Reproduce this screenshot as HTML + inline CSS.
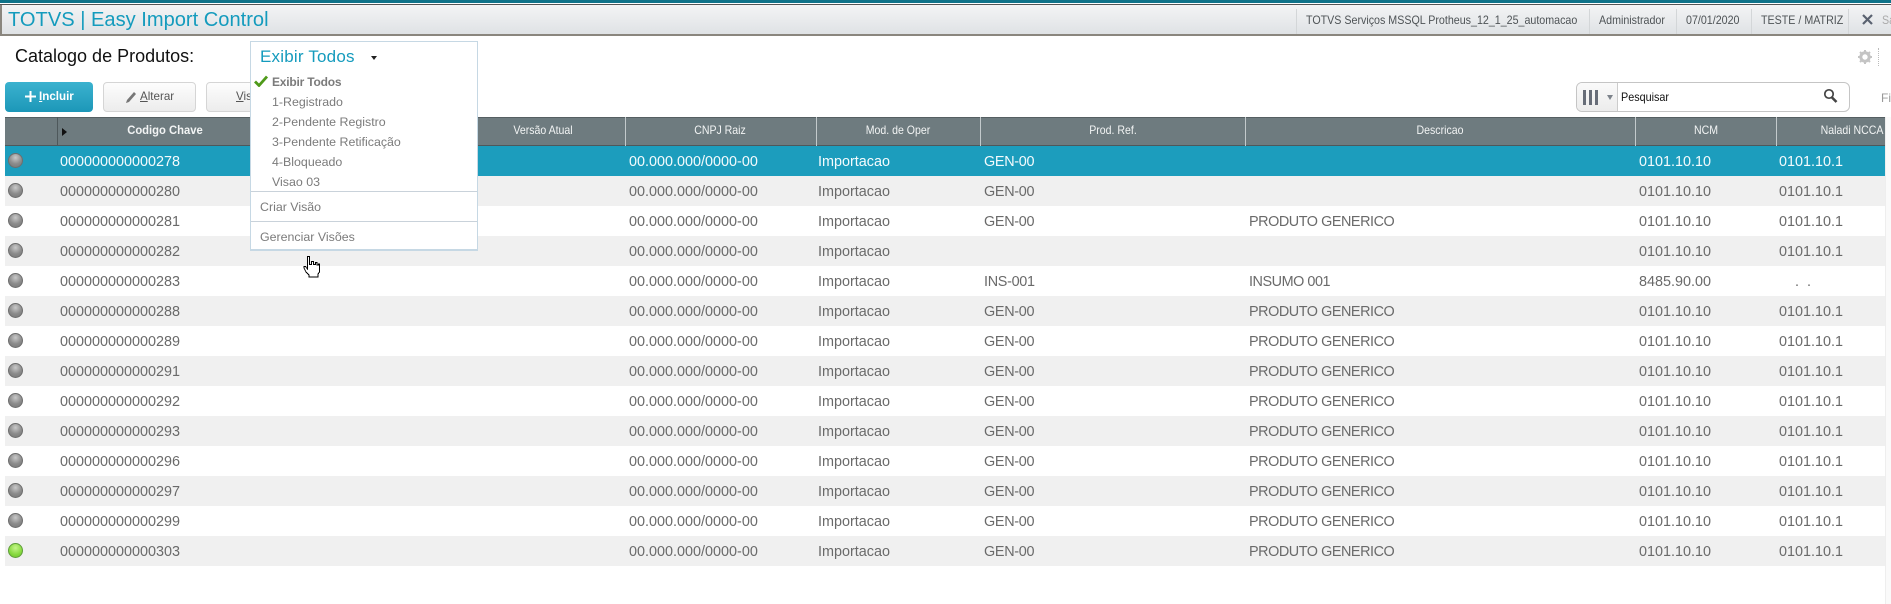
<!DOCTYPE html>
<html lang="pt"><head><meta charset="utf-8"><title>TOTVS | Easy Import Control</title>
<style>
html,body{margin:0;padding:0;background:#fff}
body{width:1891px;height:604px;overflow:hidden;position:relative;font-family:"Liberation Sans",Arial,sans-serif}
.a{position:absolute;white-space:nowrap}
#bar{position:absolute;left:0;top:4px;width:1891px;height:32px;box-sizing:border-box;border-top:1px solid #555;border-bottom:2px solid #8a867e;background:linear-gradient(#f3f4f5,#dfe2e5)}
.s{position:absolute;top:10px;height:25px;width:1px;background:#d3d6d8}
.i{position:absolute;top:12px;font-size:12px;line-height:14px;color:#4e5356;white-space:nowrap;transform:scaleX(.89);transform-origin:0 0}
.btn{position:absolute;top:82px;height:30px;box-sizing:border-box;border:1px solid #d5d5d5;border-radius:4px;background:linear-gradient(#fdfdfd,#ececec);font-size:11.6px;line-height:28px;color:#555;white-space:nowrap}
#head{position:absolute;left:5px;top:117px;width:1880px;height:29px;box-sizing:border-box;background:#6e7b7f;border-top:1px solid #555f62;border-bottom:1px solid #4e585b}
.hs{position:absolute;top:117px;height:29px;width:1px;background:#c3cacc}
.h{position:absolute;top:124px;font-size:11.6px;line-height:14px;color:#f2f4f4;transform:translateX(-50%) scaleX(.91);white-space:nowrap}
.r{position:absolute;left:5px;width:1880px;height:30px}
.g{background:#f0f0f0}
.sel{background:#1c9dbd}
.c{position:absolute;font-size:14.4px;line-height:16px;color:#6a6a6a;white-space:nowrap;margin-top:1px}
.c[style*="left:1244px"]{letter-spacing:-.45px}
.c[style*="left:979px"]{letter-spacing:-.3px}
.w{color:#f4fbfd}
.b{position:absolute;left:3px;width:15px;height:15px;border-radius:50%;box-sizing:border-box;border:1px solid #6e6e6e;background:radial-gradient(circle at 50% 28%,#c9c9c9,#8b8b8b 55%,#777)}
.gr{border-color:#5f9d3b;background:radial-gradient(circle at 50% 30%,#c5f58a,#86d93e 60%,#6fbf2e)}
#menu{position:absolute;left:250px;top:41px;width:228px;height:210px;box-sizing:border-box;background:#fff;border:1px solid #c6d8e4;border-bottom-width:2px}
.m{position:absolute;left:21px;font-size:12.4px;letter-spacing:0;line-height:14px;color:#7b7b7b;white-space:nowrap}
.l{position:absolute;left:0;width:226px;height:1px;background:#c9d2da}
</style></head><body>
<div class="a" style="left:0;top:0;width:1891px;height:3px;background:#0f7389"></div>
<div id="bar">
<div class="a" style="left:0;top:0;width:2px;height:29px;background:#8a867e"></div>
<div class="a" style="left:8px;top:3px;font-size:20.1px;line-height:24px;color:#149bbd">TOTVS | Easy Import Control</div>
<div class="s" style="left:1296px;top:4px"></div><div class="s" style="left:1589px;top:4px"></div><div class="s" style="left:1676px;top:4px"></div><div class="s" style="left:1751px;top:4px"></div><div class="s" style="left:1848px;top:4px"></div>
<div class="i" style="left:1306px;top:8px">TOTVS Serviços MSSQL Protheus_12_1_25_automacao</div>
<div class="i" style="left:1599px;top:8px">Administrador</div>
<div class="i" style="left:1686px;top:8px">07/01/2020</div>
<div class="i" style="left:1761px;top:8px">TESTE / MATRIZ</div>
<svg class="a" style="left:1862px;top:9px" width="11" height="11" viewBox="0 0 11 11"><path d="M1 1L10 10M10 1L1 10" stroke="#5a6270" stroke-width="2.2"/></svg>
<div class="i" style="left:1882px;top:8px;color:#aaa">Sa</div>
</div>

<div class="a" style="left:15px;top:46px;font-size:18px;line-height:20px;color:#111">Catalogo de Produtos:</div>
<svg class="a" style="left:1858px;top:50px" width="14" height="14" viewBox="0 0 14 14"><circle cx="7" cy="7" r="4.2" fill="none" stroke="#c4c4c4" stroke-width="3"/><path d="M7 0V3M7 11V14M0 7H3M11 7H14M2 2L4 4M10 10L12 12M12 2L10 4M4 10L2 12" stroke="#c4c4c4" stroke-width="2"/></svg>
<div class="a" style="left:1878px;top:48px;height:18px;border-left:1px dotted #bbb"></div>

<div class="btn" style="left:5px;width:88px;border:0;background:linear-gradient(#3bb2cf,#1c97b8);color:#fff;line-height:30px;font-weight:bold">
<svg class="a" style="left:20px;top:9px" width="11" height="11" viewBox="0 0 11 11"><path d="M5.5 0V11M0 5.5H11" stroke="#fff" stroke-width="2"/></svg>
<span class="a" style="left:34px"><u>I</u>ncluir</span></div>
<div class="btn" style="left:103px;width:93px">
<svg class="a" style="left:21px;top:8px" width="12" height="13" viewBox="0 0 12 13"><path d="M1 12L2 9L9 1L11 3L4 11Z" fill="#777"/></svg>
<span class="a" style="left:36px"><u>A</u>lterar</span></div>
<div class="btn" style="left:206px;width:100px"><span class="a" style="left:29px"><u>V</u>isualizar</span></div>

<div class="a" style="left:1576px;top:82px;width:274px;height:30px;box-sizing:border-box;border:1px solid #c5c5c5;border-radius:6px;background:#fff;overflow:hidden">
<div class="a" style="left:0;top:0;width:40px;height:28px;border-right:1px solid #ccc;background:linear-gradient(#fafafa,#ececec)">
<div class="a" style="left:6px;top:7px;width:3px;height:15px;background:#676d78"></div>
<div class="a" style="left:12px;top:7px;width:3px;height:15px;background:#676d78"></div>
<div class="a" style="left:18px;top:7px;width:3px;height:15px;background:#676d78"></div>
<div class="a" style="left:30px;top:12px;width:0;height:0;border-left:3.5px solid transparent;border-right:3.5px solid transparent;border-top:5px solid #7d838b"></div>
</div>
<div class="a" style="left:44px;top:7px;font-size:12px;line-height:14px;color:#111;transform:scaleX(.9);transform-origin:0 0">Pesquisar</div>
<svg class="a" style="left:246px;top:5px" width="15" height="16" viewBox="0 0 15 16"><circle cx="6" cy="6" r="4.2" fill="none" stroke="#444" stroke-width="1.7"/><path d="M9 9.5L13.5 14" stroke="#444" stroke-width="2.6"/></svg>
</div>
<div class="a" style="left:1881px;top:91px;font-size:12px;line-height:14px;color:#999">Filtrar</div>

<div id="head"></div>
<div class="hs" style="left:57px;background:#4e585b"></div>
<div class="hs" style="left:625px"></div><div class="hs" style="left:816px"></div><div class="hs" style="left:980px"></div><div class="hs" style="left:1245px"></div><div class="hs" style="left:1635px"></div><div class="hs" style="left:1776px"></div>
<div class="a" style="left:62px;top:128px;width:0;height:0;border-top:4px solid transparent;border-bottom:4px solid transparent;border-left:5px solid #111"></div>
<div class="h" style="left:165px;font-weight:bold;transform:translateX(-50%) scaleX(.97)">Codigo Chave</div>
<div class="h" style="left:543px">Versão Atual</div>
<div class="h" style="left:720px">CNPJ Raiz</div>
<div class="h" style="left:898px">Mod. de Oper</div>
<div class="h" style="left:1113px">Prod. Ref.</div>
<div class="h" style="left:1440px">Descricao</div>
<div class="h" style="left:1706px">NCM</div>
<div class="h" style="left:1852px">Naladi NCCA</div>
<div class="a" style="left:1885px;top:117px;width:6px;height:487px;background:#fafafa;border-left:1px solid #eee;box-sizing:border-box"></div>

<div class="r sel" style="top:146px"><i class="b" style="top:7px"></i><span class="c w" style="left:55px;top:7px">000000000000278</span><span class="c w" style="left:624px;top:7px">00.000.000/0000-00</span><span class="c w" style="left:813px;top:7px">Importacao</span><span class="c w" style="left:979px;top:7px">GEN-00</span><span class="c w" style="left:1634px;top:7px">0101.10.10</span><span class="c w" style="left:1774px;top:7px">0101.10.1</span></div>
<div class="r g" style="top:176px"><i class="b" style="top:7px"></i><span class="c" style="left:55px;top:7px">000000000000280</span><span class="c" style="left:624px;top:7px">00.000.000/0000-00</span><span class="c" style="left:813px;top:7px">Importacao</span><span class="c" style="left:979px;top:7px">GEN-00</span><span class="c" style="left:1634px;top:7px">0101.10.10</span><span class="c" style="left:1774px;top:7px">0101.10.1</span></div>
<div class="r" style="top:206px"><i class="b" style="top:7px"></i><span class="c" style="left:55px;top:7px">000000000000281</span><span class="c" style="left:624px;top:7px">00.000.000/0000-00</span><span class="c" style="left:813px;top:7px">Importacao</span><span class="c" style="left:979px;top:7px">GEN-00</span><span class="c" style="left:1244px;top:7px">PRODUTO GENERICO</span><span class="c" style="left:1634px;top:7px">0101.10.10</span><span class="c" style="left:1774px;top:7px">0101.10.1</span></div>
<div class="r g" style="top:236px"><i class="b" style="top:7px"></i><span class="c" style="left:55px;top:7px">000000000000282</span><span class="c" style="left:624px;top:7px">00.000.000/0000-00</span><span class="c" style="left:813px;top:7px">Importacao</span><span class="c" style="left:1634px;top:7px">0101.10.10</span><span class="c" style="left:1774px;top:7px">0101.10.1</span></div>
<div class="r" style="top:266px"><i class="b" style="top:7px"></i><span class="c" style="left:55px;top:7px">000000000000283</span><span class="c" style="left:624px;top:7px">00.000.000/0000-00</span><span class="c" style="left:813px;top:7px">Importacao</span><span class="c" style="left:979px;top:7px">INS-001</span><span class="c" style="left:1244px;top:7px">INSUMO 001</span><span class="c" style="left:1634px;top:7px">8485.90.00</span><span class="c" style="left:1790px;top:7px">.&nbsp;&nbsp;.</span></div>
<div class="r g" style="top:296px"><i class="b" style="top:7px"></i><span class="c" style="left:55px;top:7px">000000000000288</span><span class="c" style="left:624px;top:7px">00.000.000/0000-00</span><span class="c" style="left:813px;top:7px">Importacao</span><span class="c" style="left:979px;top:7px">GEN-00</span><span class="c" style="left:1244px;top:7px">PRODUTO GENERICO</span><span class="c" style="left:1634px;top:7px">0101.10.10</span><span class="c" style="left:1774px;top:7px">0101.10.1</span></div>
<div class="r" style="top:326px"><i class="b" style="top:7px"></i><span class="c" style="left:55px;top:7px">000000000000289</span><span class="c" style="left:624px;top:7px">00.000.000/0000-00</span><span class="c" style="left:813px;top:7px">Importacao</span><span class="c" style="left:979px;top:7px">GEN-00</span><span class="c" style="left:1244px;top:7px">PRODUTO GENERICO</span><span class="c" style="left:1634px;top:7px">0101.10.10</span><span class="c" style="left:1774px;top:7px">0101.10.1</span></div>
<div class="r g" style="top:356px"><i class="b" style="top:7px"></i><span class="c" style="left:55px;top:7px">000000000000291</span><span class="c" style="left:624px;top:7px">00.000.000/0000-00</span><span class="c" style="left:813px;top:7px">Importacao</span><span class="c" style="left:979px;top:7px">GEN-00</span><span class="c" style="left:1244px;top:7px">PRODUTO GENERICO</span><span class="c" style="left:1634px;top:7px">0101.10.10</span><span class="c" style="left:1774px;top:7px">0101.10.1</span></div>
<div class="r" style="top:386px"><i class="b" style="top:7px"></i><span class="c" style="left:55px;top:7px">000000000000292</span><span class="c" style="left:624px;top:7px">00.000.000/0000-00</span><span class="c" style="left:813px;top:7px">Importacao</span><span class="c" style="left:979px;top:7px">GEN-00</span><span class="c" style="left:1244px;top:7px">PRODUTO GENERICO</span><span class="c" style="left:1634px;top:7px">0101.10.10</span><span class="c" style="left:1774px;top:7px">0101.10.1</span></div>
<div class="r g" style="top:416px"><i class="b" style="top:7px"></i><span class="c" style="left:55px;top:7px">000000000000293</span><span class="c" style="left:624px;top:7px">00.000.000/0000-00</span><span class="c" style="left:813px;top:7px">Importacao</span><span class="c" style="left:979px;top:7px">GEN-00</span><span class="c" style="left:1244px;top:7px">PRODUTO GENERICO</span><span class="c" style="left:1634px;top:7px">0101.10.10</span><span class="c" style="left:1774px;top:7px">0101.10.1</span></div>
<div class="r" style="top:446px"><i class="b" style="top:7px"></i><span class="c" style="left:55px;top:7px">000000000000296</span><span class="c" style="left:624px;top:7px">00.000.000/0000-00</span><span class="c" style="left:813px;top:7px">Importacao</span><span class="c" style="left:979px;top:7px">GEN-00</span><span class="c" style="left:1244px;top:7px">PRODUTO GENERICO</span><span class="c" style="left:1634px;top:7px">0101.10.10</span><span class="c" style="left:1774px;top:7px">0101.10.1</span></div>
<div class="r g" style="top:476px"><i class="b" style="top:7px"></i><span class="c" style="left:55px;top:7px">000000000000297</span><span class="c" style="left:624px;top:7px">00.000.000/0000-00</span><span class="c" style="left:813px;top:7px">Importacao</span><span class="c" style="left:979px;top:7px">GEN-00</span><span class="c" style="left:1244px;top:7px">PRODUTO GENERICO</span><span class="c" style="left:1634px;top:7px">0101.10.10</span><span class="c" style="left:1774px;top:7px">0101.10.1</span></div>
<div class="r" style="top:506px"><i class="b" style="top:7px"></i><span class="c" style="left:55px;top:7px">000000000000299</span><span class="c" style="left:624px;top:7px">00.000.000/0000-00</span><span class="c" style="left:813px;top:7px">Importacao</span><span class="c" style="left:979px;top:7px">GEN-00</span><span class="c" style="left:1244px;top:7px">PRODUTO GENERICO</span><span class="c" style="left:1634px;top:7px">0101.10.10</span><span class="c" style="left:1774px;top:7px">0101.10.1</span></div>
<div class="r g" style="top:536px"><i class="b gr" style="top:7px"></i><span class="c" style="left:55px;top:7px">000000000000303</span><span class="c" style="left:624px;top:7px">00.000.000/0000-00</span><span class="c" style="left:813px;top:7px">Importacao</span><span class="c" style="left:979px;top:7px">GEN-00</span><span class="c" style="left:1244px;top:7px">PRODUTO GENERICO</span><span class="c" style="left:1634px;top:7px">0101.10.10</span><span class="c" style="left:1774px;top:7px">0101.10.1</span></div>

<div id="menu">
<div class="a" style="left:9px;top:5px;font-size:17px;line-height:20px;letter-spacing:.2px;color:#149bbd">Exibir Todos</div>
<div class="a" style="left:120px;top:14px;width:0;height:0;border-left:3.5px solid transparent;border-right:3.5px solid transparent;border-top:4px solid #222"></div>
<svg class="a" style="left:3px;top:33px" width="14" height="12" viewBox="0 0 14 12"><path d="M1 6.5L5 10.5L13 1.5" fill="none" stroke="#4f9a1a" stroke-width="2.8"/></svg>
<div class="m" style="top:33px;font-weight:bold;font-size:12px;letter-spacing:-.2px">Exibir Todos</div>
<div class="m" style="top:53px">1-Registrado</div>
<div class="m" style="top:73px">2-Pendente Registro</div>
<div class="m" style="top:93px">3-Pendente Retificação</div>
<div class="m" style="top:113px">4-Bloqueado</div>
<div class="m" style="top:133px">Visao 03</div>
<div class="l" style="top:149px"></div>
<div class="m" style="left:9px;top:158px">Criar Visão</div>
<div class="l" style="top:179px"></div>
<div class="m" style="left:9px;top:188px">Gerenciar Visões</div>
</div>

<svg class="a" style="left:303px;top:255px" width="18" height="23" viewBox="0 0 18 23"><path d="M4.5 1.5H6.5V9.5H8.5V6.5H10.5V9.5H12.5V7.5H14V10H15.5V9H16.5V17L15 19V22H6V20L3 17L1 13V11.5H2.5L4.5 14Z" fill="#fff" stroke="#000" stroke-width="1" shape-rendering="crispEdges"/></svg>
</body></html>
